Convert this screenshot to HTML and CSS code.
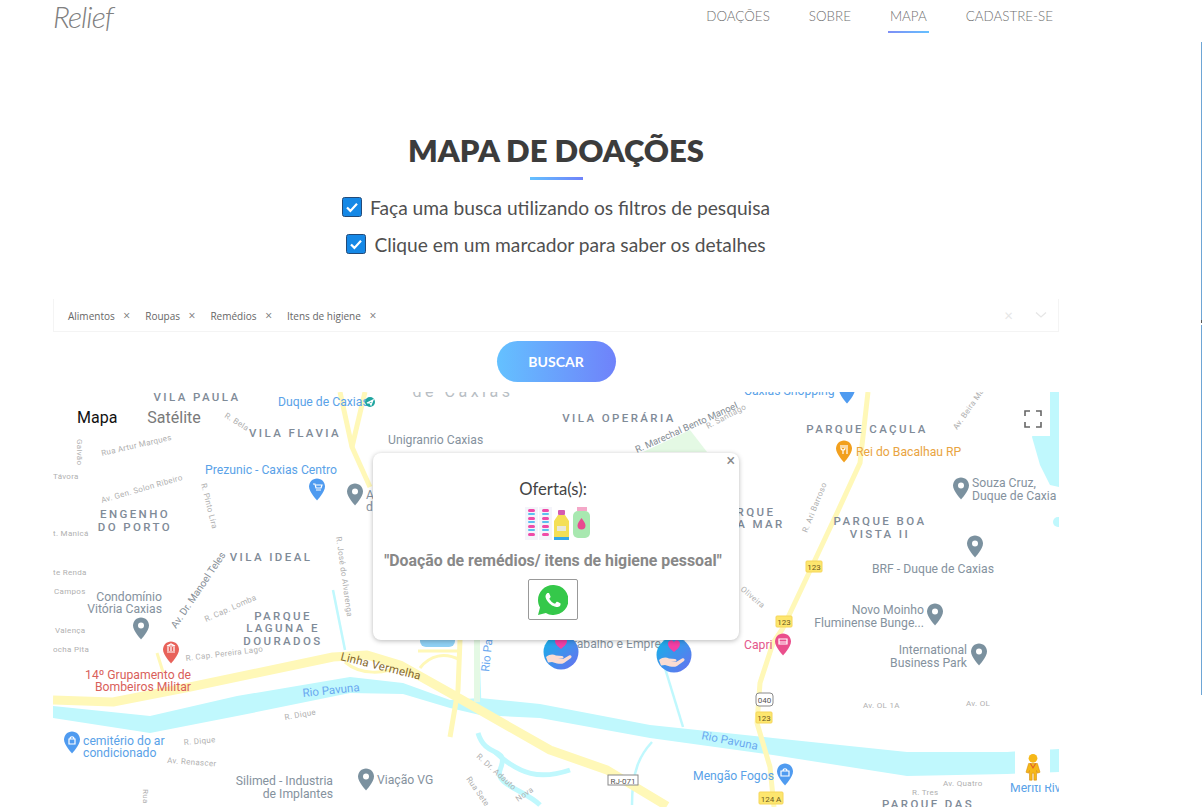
FILE: index.html
```html
<!DOCTYPE html>
<html lang="pt-BR">
<head>
    <meta charset="UTF-8">
    <meta name="viewport" content="width=device-width, initial-scale=1.0">
    <title>Relief - Mapa de Doações</title>
    <link rel="stylesheet" href="styles.css">
</head>
<body>
    <div class="edge-line"></div>
    <div class="page">
        <header class="topbar">
            <a class="logo">Relief</a>
            <nav class="nav">
                <a>DOAÇÕES</a>
                <a>SOBRE</a>
                <a class="active">MAPA</a>
                <a>CADASTRE-SE</a>
            </nav>
        </header>

        <section class="hero">
            <h1>MAPA DE DOAÇÕES</h1>
            <div class="title-bar"></div>
            <p class="hint">
                <svg class="check" viewBox="0 0 20 20"><rect x="0.5" y="0.5" width="19" height="19" rx="2" fill="#1588e6" stroke="#234a78"/><path d="M5 10.5l3.4 3.4L15 6.8" fill="none" stroke="#fff" stroke-width="2.2"/></svg>
                Faça uma busca utilizando os filtros de pesquisa
            </p>
            <p class="hint">
                <svg class="check" viewBox="0 0 20 20"><rect x="0.5" y="0.5" width="19" height="19" rx="2" fill="#1588e6" stroke="#234a78"/><path d="M5 10.5l3.4 3.4L15 6.8" fill="none" stroke="#fff" stroke-width="2.2"/></svg>
                Clique em um marcador para saber os detalhes
            </p>
        </section>

        <!-- Filtros -->
        <div class="filter">
            <div class="tags">
                <span class="tag">Alimentos <i>×</i></span>
                <span class="tag">Roupas <i>×</i></span>
                <span class="tag">Remédios <i>×</i></span>
                <span class="tag">Itens de higiene <i>×</i></span>
            </div>
            <div class="filter-tools">
                <span class="clear">×</span>
                <svg class="chevron" viewBox="0 0 12 8"><path d="M1 1.5l5 4.5 5-4.5" fill="none" stroke="#e6e6e6" stroke-width="1.3"/></svg>
            </div>
        </div>
        <div class="search-row"><button class="btn-search">BUSCAR</button></div>

        <!-- Mapa -->
        <div class="map">
            <svg class="map-canvas" viewBox="53 392 1006 415">
                <defs>
                    <symbol id="pin" viewBox="0 0 16 22">
                        <path d="M8 0C3.6 0 0 3.6 0 8c0 5.5 8 14 8 14s8-8.5 8-14c0-4.4-3.6-8-8-8z"/>
                    </symbol>
                    <symbol id="pin-dot" viewBox="0 0 16 22">
                        <path d="M8 0C3.6 0 0 3.6 0 8c0 5.5 8 14 8 14s8-8.5 8-14c0-4.4-3.6-8-8-8z"/>
                        <circle cx="8" cy="8" r="3" fill="#fff"/>
                    </symbol>
                    <linearGradient id="marker-bg" x1="0" y1="0" x2="1" y2="1">
                        <stop offset="0" stop-color="#12b5e8"/>
                        <stop offset="1" stop-color="#6a6ff0"/>
                    </linearGradient>
                    <symbol id="marker" viewBox="0 0 36 36">
                        <circle cx="18" cy="18" r="17.5" fill="url(#marker-bg)"/>
                        <path d="M18 15c-3-2.5-6-5-6-8 0-4 5-5 6-1.5 1-3.5 6-2.5 6 1.5 0 3-3 5.5-6 8z" fill="#f33fa5"/>
                        <path d="M3 23c4-3 7-3 10-1.5l6 .5c2 .2 2 2.5 0 2.5h-4l5 .5 6-3.5c2-1 3.5 1 2 2.5l-7 5c-2 1-4 1-7 .5l-5-1.5-4 .5z" fill="#fbdcd2"/>
                    </symbol>
                </defs>

                <!-- agua -->
                <g class="water">
                    <path d="M53 706L150 716 237 696 350 677 403 683 450 700 480 698 540 704 650 725 773 738 907 752 1007 752 1059 749V772L1007 774 907 776 773 755 650 738 540 718 480 715 450 708 403 694 350 693 237 716 150 733 53 718z"/>
                    <path d="M1045 392H1059V487L1050 485 1040 465 1032 437z"/>
                    <circle cx="1058" cy="522" r="5"/>
                </g>
                <g class="stream">
                    <path d="M657 642L683 727"/>
                    <path d="M478 640L480 700"/>
                    <path d="M333 590L345 650"/>
                    <path d="M652 742C640 755 632 770 632 805"/>
                    <path class="wide" d="M478 733C486 760 510 745 500 770 495 785 525 790 540 805"/>
                    <path class="wide" d="M495 752C520 775 540 780 570 770"/>
                </g>
                <path class="park" d="M643 452L690 430 707 452z"/>
                <path class="park" d="M474 640H480V702H474z"/>

                <!-- vias -->
                <g class="road">
                    <path class="main" d="M53 700L113 702 190 687 333 657 367 655 400 665 450 693 550 750 607 770 667 806"/>
                    <path d="M868 392L860 463 837 513 807 577 783 628 773 643 760 683 757 723 770 767 774 807"/>
                    <path d="M340 392L352 447 370 487"/>
                    <path d="M365 392L352 447"/>
                    <path d="M460 640L458 690 450 737"/>
                    <path class="thin" d="M418 651H460M420 668C430 655 445 652 460 660M345 662C360 675 385 675 400 665"/>
                    <path class="thin" d="M157 653L163 672"/>
                </g>

                <!-- nomes de bairros -->
                <g class="area">
                    <text x="197" y="401">VILA PAULA</text>
                    <text x="295" y="437">VILA FLAVIA</text>
                    <text x="619" y="422">VILA OPERÁRIA</text>
                    <text x="135" y="518">ENGENHO</text>
                    <text x="135" y="531">DO PORTO</text>
                    <text x="271" y="561">VILA IDEAL</text>
                    <text x="283" y="620">PARQUE</text>
                    <text x="283" y="632">LAGUNA E</text>
                    <text x="283" y="645">DOURADOS</text>
                    <text x="867" y="433">PARQUE CAÇULA</text>
                    <text x="880" y="525">PARQUE BOA</text>
                    <text x="880" y="538">VISTA II</text>
                    <text x="756" y="516">RQUE</text>
                    <text x="761" y="528">A MAR</text>
                    <text x="928" y="808">PARQUE DAS</text>
                </g>
                <text class="area-big" x="463" y="397">de Caxias</text>

                <!-- lugares -->
                <g class="poi">
                    <text x="388" y="444">Unigranrio Caxias</text>
                    <text x="366" y="499">A</text>
                    <text x="366" y="511">d</text>
                    <text class="right" x="162" y="601">Condomínio</text>
                    <text class="right" x="162" y="613">Vitória Caxias</text>
                    <text class="right" x="333" y="785">Silimed - Industria</text>
                    <text class="right" x="333" y="798">de Implantes</text>
                    <text x="377" y="784">Viação VG</text>
                    <text x="972" y="487">Souza Cruz,</text>
                    <text x="972" y="500">Duque de Caxia</text>
                    <text x="872" y="573">BRF - Duque de Caxias</text>
                    <text class="right" x="924" y="614">Novo Moinho</text>
                    <text class="right" x="924" y="627">Fluminense Bunge...</text>
                    <text class="right" x="967" y="654">International</text>
                    <text class="right" x="967" y="667">Business Park</text>
                    <text x="566" y="648">Trabalho e Empre</text>
                </g>
                <g class="poi blue">
                    <text x="278" y="406">Duque de Caxias</text>
                    <text x="205" y="474">Prezunic - Caxias Centro</text>
                    <text x="744" y="395">Caxias Shopping</text>
                    <text x="83" y="745">cemitério do ar</text>
                    <text x="83" y="757">condicionado</text>
                    <text x="693" y="780">Mengão Fogos</text>
                    <text x="1010" y="792">Meriti River</text>
                </g>
                <g class="poi red">
                    <text class="right" x="191" y="679">14º Grupamento de</text>
                    <text class="right" x="191" y="691">Bombeiros Militar</text>
                </g>
                <text class="poi orange" x="856" y="456">Rei do Bacalhau RP</text>
                <text class="poi pink" x="744" y="649">Capri</text>

                <!-- rios e vias com nome -->
                <text class="river" transform="translate(303 697) rotate(-6)">Rio Pavuna</text>
                <text class="river" transform="translate(701 739) rotate(11)">Rio Pavuna</text>
                <text class="river" transform="translate(489 672) rotate(-84)">Rio Pa</text>
                <text class="highway" transform="translate(340 660) rotate(14)">Linha Vermelha</text>

                <g class="street">
                    <text transform="translate(224 417) rotate(32)">R. Bela</text>
                    <text transform="translate(102 456) rotate(-13)">Rua Artur Marques</text>
                    <text transform="translate(77 439) rotate(90)">Galvão</text>
                    <text x="53" y="479">Távora</text>
                    <text transform="translate(102 503) rotate(-16)">Av. Gen. Solon Ribeiro</text>
                    <text transform="translate(201 484) rotate(76)">R. Pinto Lira</text>
                    <text x="53" y="536">t. Manicá</text>
                    <text x="53" y="575">te Renda</text>
                    <text x="54" y="594">Campos</text>
                    <text x="55" y="633">Valença</text>
                    <text x="53" y="652">ocha Pita</text>
                    <text transform="translate(336 537) rotate(82)">R. José do Alvarenga</text>
                    <text transform="translate(206 622) rotate(-24)">R. Cap. Lomba</text>
                    <text transform="translate(186 661) rotate(-7)">R. Cap. Pereira Lago</text>
                    <text transform="translate(285 720) rotate(-10)">R. Dique</text>
                    <text transform="translate(184 745) rotate(-5)">R. Dique</text>
                    <text transform="translate(167 763) rotate(4)">Av. Renascer</text>
                    <text transform="translate(143 789) rotate(90)">Rua</text>
                    <text transform="translate(476 757) rotate(42)">R. Dr. Adauto</text>
                    <text transform="translate(466 779) rotate(55)">Rua Sete</text>
                    <text transform="translate(518 802) rotate(-35)">Nova</text>
                    <text transform="translate(708 429) rotate(-28)">R. Santiago</text>
                    <text transform="translate(957 430) rotate(-55)">Av. Beira Mar</text>
                    <text transform="translate(807 533) rotate(-68)">R. Ari Barroso</text>
                    <text transform="translate(740 590) rotate(40)">Oliveira</text>
                    <text x="863" y="708">Av. OL 1A</text>
                    <text x="966" y="706">Av. OL</text>
                    <text x="912" y="795">R. Tres</text>
                    <text x="943" y="786">Av. Quatro</text>
                </g>
                <text class="street-dark" transform="translate(176 629) rotate(-56)">Av. Dr. Manoel Teles</text>
                <text class="street-dark tight" transform="translate(637 453) rotate(-24)">R. Marechal Bento Manoel</text>

                <!-- placas -->
                <g class="shield">
                    <rect x="806" y="561" width="16" height="11" rx="1"/><text x="814" y="570">123</text>
                    <rect x="776" y="616" width="16" height="11" rx="1"/><text x="784" y="625">123</text>
                    <rect x="756" y="712" width="16" height="11" rx="1"/><text x="764" y="721">123</text>
                    <rect x="759" y="792" width="24" height="12" rx="1"/><text x="771" y="802">124 A</text>
                </g>
                <rect class="shield-light" x="756" y="693" width="17" height="13" rx="3"/>
                <text class="shield-text" x="764.5" y="703">040</text>
                <rect class="shield-light" x="608" y="775" width="30" height="10"/>
                <text class="shield-text" x="623" y="783.5">RJ-071</text>

                <!-- pins -->
                <g class="pin-grey">
                    <use href="#pin-dot" x="347" y="483" width="16" height="23"/>
                    <use href="#pin-dot" x="133" y="617" width="16" height="23"/>
                    <use href="#pin-dot" x="358" y="768" width="16" height="23"/>
                    <use href="#pin-dot" x="953" y="477" width="16" height="23"/>
                    <use href="#pin-dot" x="967" y="535" width="16" height="23"/>
                    <use href="#pin-dot" x="927" y="603" width="16" height="23"/>
                    <use href="#pin-dot" x="971" y="643" width="16" height="23"/>
                </g>
                <g class="pin-blue">
                    <use href="#pin" x="309" y="478" width="16" height="23"/>
                    <use href="#pin" x="839" y="381" width="16" height="23"/>
                    <use href="#pin" x="64" y="731" width="16" height="23"/>
                    <use href="#pin" x="777" y="763" width="16" height="23"/>
                </g>
                <path class="glyph" d="M313 484h2l1 4h5l1-3h-6M316 490h5" />
                <path class="glyph" d="M69 739h6v5h-6zM70 739c0-3 4-3 4 0M781 771h8v5h-8zM783 771c0-3 4-3 4 0" />
                <use class="pin-red" href="#pin" x="163" y="641" width="16" height="23"/>
                <path class="glyph" d="M167 646l4-2 4 2zM168 647v4M171 647v4M174 647v4M167 652h8" />
                <use class="pin-orange" href="#pin" x="836" y="440" width="16" height="23"/>
                <path class="glyph" d="M841 445v3c0 1 1 2 2 2v4M843 445v3M845 445v3c0 1-1 2-2 2M847 445v9" />
                <use class="pin-pink" href="#pin" x="775" y="633" width="16" height="23"/>
                <path class="glyph" d="M779 639h8v5h-8zM779 642h8" />
                <circle class="pin-teal" cx="370" cy="402" r="5"/>
                <path class="glyph" d="M367 403l6-3-2 5-1-2z" />

                <!-- marcadores de doacao -->
                <rect class="marker-hidden" x="420" y="632" width="35" height="15" rx="6"/>
                <use href="#marker" x="543" y="634" width="36" height="36"/>
                <use href="#marker" x="656" y="637" width="36" height="36"/>
            </svg>

            <div class="map-types">
                <span class="active">Mapa</span>
                <span>Satélite</span>
            </div>
            <div class="fullscreen">
                <svg viewBox="0 0 18 18"><path d="M1 6V1h5M12 1h5v5M17 12v5h-5M6 17H1v-5" fill="none" stroke="#666" stroke-width="1.6"/></svg>
            </div>
            <div class="pegman">
                <svg viewBox="0 0 20 32"><circle cx="10" cy="6" r="5" fill="#f6b818"/><path d="M5 12h10l3 10-3 1-1-3v11h-3v-8h-2v8H6V20l-1 3-3-1z" fill="#f6b818" stroke="#d98f10" stroke-width=".7"/><path d="M7 12l3 5 3-5" fill="none" stroke="#e0642a" stroke-width="1.2"/></svg>
            </div>

            <!-- popup do marcador -->
            <div class="popup">
                <span class="popup-close">×</span>
                <p class="popup-title">Oferta(s):</p>
                <svg class="popup-icons" viewBox="0 0 66 36">
                    <rect x="0" y="1" width="13" height="33" fill="#f4f4fa"/>
                    <rect x="14" y="1" width="13" height="33" fill="#f4f4fa"/>
                    <g fill="#ef4aa8">
                        <rect x="3" y="3" width="7" height="3" rx="1.5"/><rect x="17" y="3" width="7" height="3" rx="1.5"/>
                        <rect x="3" y="11" width="7" height="3" rx="1.5"/><rect x="17" y="11" width="7" height="3" rx="1.5"/>
                        <rect x="3" y="19" width="7" height="3" rx="1.5"/><rect x="17" y="19" width="7" height="3" rx="1.5"/>
                        <rect x="3" y="27" width="7" height="3" rx="1.5"/><rect x="17" y="27" width="7" height="3" rx="1.5"/>
                    </g>
                    <g fill="#5cc0f0">
                        <rect x="3" y="7" width="7" height="2" rx="1"/><rect x="17" y="7" width="7" height="2" rx="1"/>
                        <rect x="3" y="15" width="7" height="2" rx="1"/><rect x="17" y="15" width="7" height="2" rx="1"/>
                        <rect x="3" y="23" width="7" height="2" rx="1"/><rect x="17" y="23" width="7" height="2" rx="1"/>
                    </g>
                    <rect x="33" y="4" width="7" height="5" rx="1" fill="#d45cb0"/>
                    <path d="M33 9h7l4 6v16c0 2-1 3-3 3h-9c-2 0-3-1-3-3V15z" fill="#f4df55"/>
                    <rect x="29" y="31" width="15" height="3" fill="#35a8e8"/>
                    <rect x="32" y="20" width="9" height="5" fill="#e8e8d8"/>
                    <rect x="52" y="1" width="10" height="4" fill="#f4a8c8"/>
                    <rect x="48" y="5" width="17" height="27" rx="5" fill="#a8e8b0"/>
                    <path d="M56.5 12c2 3 4 5 4 7.5a4 4 0 0 1-8 0c0-2.5 2-4.5 4-7.5z" fill="#e84a90"/>
                </svg>
                <p class="popup-text">"Doação de remédios/ itens de higiene pessoal"</p>
                <a class="popup-whats">
                    <svg viewBox="0 0 24 24"><path d="M12 0C5.4 0 0 5.4 0 12c0 2.1.55 4.2 1.6 6L0 24l6.3-1.65A12 12 0 1 0 12 0z" fill="#35c84a"/><path d="M17.472 14.382c-.297-.149-1.758-.867-2.03-.967-.273-.099-.471-.148-.67.15-.197.297-.767.966-.94 1.164-.173.199-.347.223-.644.075-.297-.15-1.255-.463-2.39-1.475-.883-.788-1.48-1.761-1.653-2.059-.173-.297-.018-.458.13-.606.134-.133.298-.347.446-.52.149-.174.198-.298.298-.497.099-.198.05-.371-.025-.52-.075-.149-.669-1.612-.916-2.207-.242-.579-.487-.5-.669-.51-.173-.008-.371-.01-.57-.01-.198 0-.52.074-.792.372-.272.297-1.04 1.016-1.04 2.479 0 1.462 1.065 2.875 1.213 3.074.149.198 2.096 3.2 5.077 4.487.709.306 1.262.489 1.694.625.712.227 1.36.195 1.871.118.571-.085 1.758-.719 2.006-1.413.248-.694.248-1.289.173-1.413-.074-.124-.272-.198-.57-.347z" fill="#fff"/></svg>
                </a>
            </div>
        </div>
    </div>
</body>
</html>
```

FILE: styles.css
```css
html, body {
    margin: 0;
    padding: 0;
    height: 807px;
    overflow: hidden;
    background: #fff;
    font-family: Lato, "Open Sans", sans-serif;
}
.edge-line {
    position: absolute;
    top: 42px;
    right: 0;
    width: 1px;
    height: 653px;
    background: linear-gradient(#6ea6d6 0 278px, #555 278px 281px, #fff 281px 283px, #6ea6d6 283px);
}
.page {
    width: 1006px;
    margin-left: 53px;
}

/* topo */
.topbar {
    display: flex;
    justify-content: space-between;
    height: 33px;
}
.logo {
    font-style: italic;
    font-weight: 300;
    font-size: 30px;
    letter-spacing: -1px;
    line-height: 33px;
    color: #808080;
}
.nav {
    display: flex;
    gap: 35px;
    margin-right: 4px;
}
.nav a {
    display: block;
    padding: 0 2px;
    font-size: 13.4px;
    font-weight: 300;
    line-height: 32px;
    color: #6f6f6f;
}
.nav a.active {
    height: 31px;
    border-bottom: 2px solid;
    border-image: linear-gradient(90deg, #7f8df5, #64c1ff) 1;
}

/* titulo */
.hero {
    text-align: center;
    padding-top: 96px;
}
.hero h1 {
    margin: 0;
    font-size: 31px;
    font-weight: 800;
    line-height: 42px;
    color: #3c3c3c;
}
.title-bar {
    width: 53px;
    height: 3px;
    margin: 6px auto 16px;
    background: linear-gradient(90deg, #64c1ff, #6f82fa);
}
.hint {
    display: flex;
    justify-content: center;
    align-items: center;
    gap: 8px;
    margin: 0 0 15px;
    height: 22px;
    font-size: 19.2px;
    color: #505050;
}
.check {
    width: 20px;
    height: 20px;
}

/* filtros */
.filter {
    display: flex;
    justify-content: space-between;
    align-items: center;
    height: 32px;
    margin-top: 44px;
    border-left: 1px solid #f4f4f4;
    border-right: 1px solid #f4f4f4;
    border-bottom: 1px solid #f4f4f4;
}
.tags {
    display: flex;
    gap: 15px;
    padding-left: 14px;
}
.tag {
    font-family: "Open Sans", sans-serif;
    font-size: 10px;
    color: #666;
}
.tag i {
    margin-left: 6px;
    font-style: normal;
    font-size: 12px;
    color: #777;
}
.filter-tools {
    display: flex;
    align-items: center;
    gap: 22px;
    padding-right: 11px;
}
.clear {
    font-size: 15px;
    color: #e6e6e6;
}
.chevron {
    width: 12px;
    height: 8px;
}
.search-row {
    display: flex;
    justify-content: center;
    padding: 9px 0 10px;
}
.btn-search {
    width: 119px;
    height: 41px;
    border: none;
    border-radius: 21px;
    background: linear-gradient(90deg, #64c1ff, #6f82fa);
    color: #fff;
    font-family: Lato, sans-serif;
    font-size: 14px;
    font-weight: 700;
}

/* mapa */
.map {
    position: relative;
    height: 415px;
    overflow: hidden;
    font-family: Roboto, sans-serif;
}
.map-canvas {
    display: block;
    width: 1006px;
    height: 415px;
    background: #fff;
    font-family: Roboto, sans-serif;
}
.water { fill: #c0f8fd; }
.stream {
    fill: none;
    stroke: #c0f8fd;
    stroke-width: 2.5;
}
.stream .wide { stroke-width: 5; }
.park { fill: #e4f9e4; }
.road {
    fill: none;
    stroke: #fff8b8;
    stroke-width: 5;
    stroke-linejoin: round;
}
.road .main { stroke-width: 9; }
.road .thin { stroke-width: 3; }

.area {
    font-size: 11.5px;
    font-weight: 500;
    letter-spacing: 2.4px;
    text-anchor: middle;
    fill: #7f8b98;
}
.area-big {
    font-size: 16px;
    letter-spacing: 3.5px;
    text-anchor: middle;
    fill: #b8bec4;
}
.poi {
    font-size: 12.2px;
    fill: #85929e;
}
.poi .right { text-anchor: end; }
.poi.blue { fill: #5aa2e8; }
.poi.red { fill: #d9605a; }
.poi.orange { fill: #e9a441; }
.poi.pink { fill: #e4588c; }
.river {
    font-size: 11.5px;
    fill: #6aa8f0;
}
.highway {
    font-size: 11.5px;
    letter-spacing: .2px;
    fill: #86692f;
}
.street {
    font-size: 8px;
    letter-spacing: .3px;
    fill: #b0b0b0;
}
.street-dark {
    font-size: 10px;
    fill: #858d95;
}
.street-dark.tight { font-size: 9.5px; }
.shield rect {
    fill: #fde66e;
    stroke: #f5d65a;
}
.shield text {
    font-size: 8px;
    text-anchor: middle;
    fill: #6b5a1e;
}
.shield-light {
    fill: #fff;
    stroke: #8a8a8a;
}
.shield-text {
    font-size: 8px;
    text-anchor: middle;
    fill: #555;
}
.pin-grey { fill: #7b919f; }
.pin-blue { fill: #4f9bf0; }
.pin-red { fill: #e8625a; }
.pin-orange { fill: #f2a01e; }
.pin-pink { fill: #ea4f8c; }
.pin-teal { fill: #1fa5a0; }
.marker-hidden { fill: #8fd0f4; }
.glyph {
    fill: none;
    stroke: #fff;
    stroke-width: 1.2;
}

/* controles do mapa */
.map-types {
    position: absolute;
    top: 16px;
    left: 24px;
    display: flex;
    gap: 30px;
    font-size: 16px;
    line-height: 20px;
    color: #7a7a7a;
}
.map-types .active { color: #111; }
.fullscreen {
    position: absolute;
    top: 0;
    right: 9px;
    width: 38px;
    height: 44px;
    box-sizing: border-box;
    padding: 10px 0 0 3px;
    display: flex;
    align-items: center;
    justify-content: center;
    background: #fff;
}
.fullscreen svg {
    width: 18px;
    height: 18px;
}
.pegman {
    position: absolute;
    top: 353px;
    right: 9px;
    width: 35px;
    height: 40px;
    display: flex;
    justify-content: center;
    background: #fff;
}
.pegman svg {
    width: 18px;
    height: 28px;
    margin-top: 8px;
}

/* popup */
.popup {
    position: absolute;
    top: 61px;
    left: 320px;
    width: 366px;
    height: 187px;
    box-sizing: border-box;
    padding: 26px 6px 0 0;
    background: #fff;
    border-radius: 8px;
    box-shadow: 0 1px 5px rgba(0, 0, 0, .28);
    text-align: center;
}
.popup-close {
    position: absolute;
    top: 0;
    right: 4px;
    font-size: 16px;
    line-height: 16px;
    color: #888;
}
.popup-title {
    margin: 0 0 7px;
    font-family: Lato, sans-serif;
    font-size: 16.7px;
    line-height: 20px;
    color: #444;
}
.popup-icons {
    display: block;
    width: 66px;
    height: 36px;
    margin: 0 0 0 152px;
}
.popup-text {
    margin: 9px 0 8px;
    font-size: 15.85px;
    font-weight: 700;
    line-height: 20px;
    color: #888;
}
.popup-whats {
    display: inline-flex;
    align-items: center;
    justify-content: center;
    width: 50px;
    height: 41px;
    box-sizing: border-box;
    border: 1px solid #999;
    border-radius: 2px;
}
.popup-whats svg {
    width: 30px;
    height: 30px;
}
```
